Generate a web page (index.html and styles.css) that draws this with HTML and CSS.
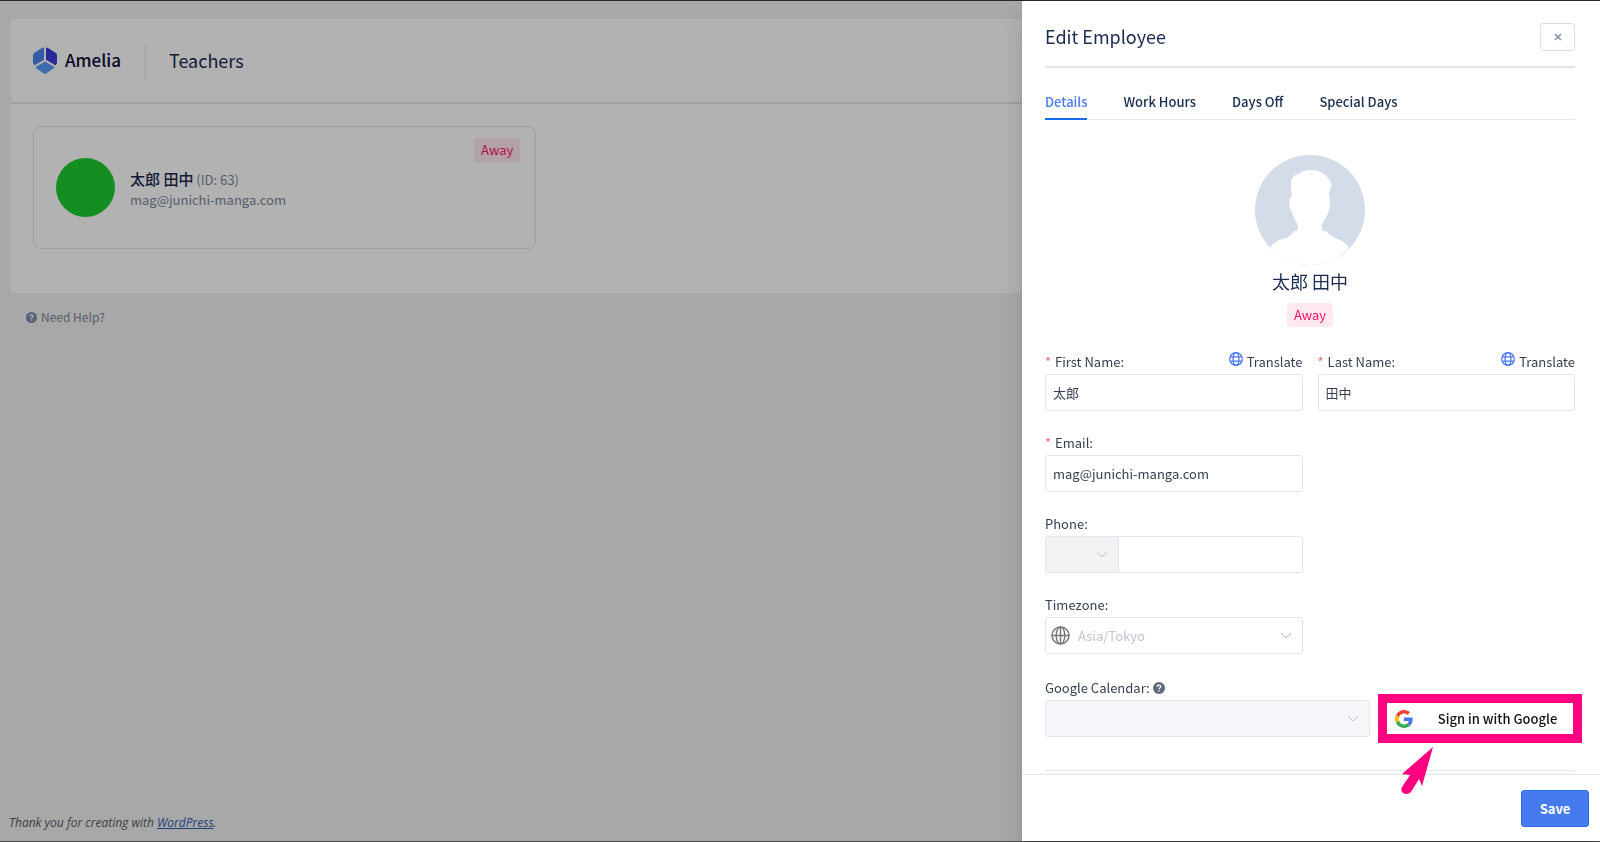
FILE: index.html
```html
<!DOCTYPE html>
<html lang="ja">
<head>
  <meta charset="UTF-8" />
  <meta name="viewport" content="width=device-width, initial-scale=1.0"/>
  <title>Amelia - Teachers</title>
  <link rel="stylesheet" href="styles.css">
</head>
<body>
  <div class="admin-bar"></div>

  <!-- Page behind the dialog -->
  <div class="page">
    <main class="panel">
      <header class="panel-header">
        <div class="logo">
          <svg width="24" height="27" viewBox="0 0 24 27">
            <path d="M11 1.2v11.6L1.600 18.200Q0 17.400 0 15.600V8.400Q0 6.600 1.500 5.700L9 .9Q11-.2 11 1.200z" fill="#4a83ee"/>
            <path d="M13 1.200v11.600l9.400 5.400q1.600-.8 1.600-2.600V8.400q0-1.800-1.500-2.700L15 .9q-2-1.100-2 .3z" fill="#3a3cdf"/>
            <path d="M12 14.600l9 5.200q.9.600 0 1.200l-7.400 5.200q-1.600 1-3.200 0L3 21q-.9-.6 0-1.200z" fill="#5a9df5"/>
          </svg>
          <span class="logo-text">Amelia</span>
        </div>
        <h1>Teachers</h1>
      </header>

      <div class="employees">
        <div class="employee">
          <div class="employee-photo"></div>
          <div class="employee-info">
            <div><strong>太郎 田中</strong> (ID: 63)</div>
            <div>mag@junichi-manga.com</div>
          </div>
          <span class="badge">Away</span>
        </div>
      </div>
    </main>

    <a class="help" href="#">
      <svg width="11" height="11" viewBox="0 0 12 12">
        <circle cx="6" cy="6" r="6" fill="#7f8bab"/>
        <path d="M4.300 4.700q0-1.600 1.700-1.600t1.700 1.400q0 .8-.9 1.300Q6 6.200 6 7" fill="none" stroke="#fff" stroke-width="1.300"/>
        <circle cx="6" cy="8.800" r=".8" fill="#fff"/>
      </svg>
      Need Help?
    </a>

    <footer class="page-footer">Thank you for creating with <a href="#">WordPress</a>.</footer>
  </div>
  <div class="overlay"></div>

  <!-- Edit dialog -->
  <form class="drawer">
    <div class="drawer-body">
      <div class="drawer-header">
        <h2>Edit Employee</h2>
        <button type="button" class="close" aria-label="Close">
          <svg width="8" height="8" viewBox="0 0 8 8"><path d="M1 1l6 6M7 1L1 7" stroke="#8590a6" stroke-width="1.5"/></svg>
        </button>
      </div>

      <nav class="tabs">
        <button type="button" class="tab active">Details</button>
        <button type="button" class="tab">Work Hours</button>
        <button type="button" class="tab">Days Off</button>
        <button type="button" class="tab">Special Days</button>
      </nav>

      <div class="profile">
        <svg width="110" height="110" viewBox="0 0 110 110">
          <circle cx="55" cy="55" r="55" fill="#d4dbe9"/>
          <path d="M15 93Q19 86 28 84Q36 82 39 76L42 76Q44 72 42 68Q39 64 38 60Q33 51 35 43L37 41Q34 24 39 21Q42 19 44 19Q48 15 56 15Q67 15 73 23Q78 29 76 33Q74 35 74 41L75 43Q76 52 73 58Q70 65 67 69Q66 72 68 76L71 76Q76 82 85 85Q91 88 94 93Q78 110 55 110Q32 110 15 93z" fill="#fff"/>
        </svg>
        <h3>太郎 田中</h3>
        <span class="badge">Away</span>
      </div>

      <div class="fields">
        <div class="field">
          <div class="label-row">
            <label class="required" for="first-name">First Name:</label>
            <a class="translate" href="#">
              <svg width="14" height="14" viewBox="0 0 14 14" fill="none" stroke="#4a74f0" stroke-width="1.2"><circle cx="7" cy="7" r="6.300"/><ellipse cx="7" cy="7" rx="3" ry="6.300"/><path d="M1.300 4.800h11.400M1.300 9.200h11.400"/></svg>
              Translate
            </a>
          </div>
          <input type="text" id="first-name" value="太郎">
        </div>

        <div class="field">
          <div class="label-row">
            <label class="required" for="last-name">Last Name:</label>
            <a class="translate" href="#">
              <svg width="14" height="14" viewBox="0 0 14 14" fill="none" stroke="#4a74f0" stroke-width="1.2"><circle cx="7" cy="7" r="6.300"/><ellipse cx="7" cy="7" rx="3" ry="6.300"/><path d="M1.300 4.800h11.400M1.300 9.200h11.400"/></svg>
              Translate
            </a>
          </div>
          <input type="text" id="last-name" value="田中">
        </div>

        <div class="field first-column">
          <label class="required" for="email">Email:</label>
          <input type="email" id="email" value="mag@junichi-manga.com">
        </div>

        <div class="field first-column">
          <label for="phone">Phone:</label>
          <div class="phone">
            <div class="select country">
              <select aria-label="Country code" disabled><option></option></select>
              <svg class="chevron" width="12" height="7" viewBox="0 0 12 7"><path d="M1 1l5 5 5-5" fill="none" stroke="#c0c4cc"/></svg>
            </div>
            <input type="tel" id="phone">
          </div>
        </div>

        <div class="field first-column">
          <label for="timezone">Timezone:</label>
          <div class="select timezone">
            <svg class="globe" width="19" height="19" viewBox="0 0 19 19" fill="none" stroke="#777" stroke-width="1.500"><circle cx="9.500" cy="9.500" r="8.500"/><ellipse cx="9.500" cy="9.500" rx="4.300" ry="8.500"/><path d="M1 9.500h17M9.500 1v17"/></svg>
            <select id="timezone"><option>Asia/Tokyo</option></select>
            <svg class="chevron" width="12" height="7" viewBox="0 0 12 7"><path d="M1 1l5 5 5-5" fill="none" stroke="#c0c4cc"/></svg>
          </div>
        </div>
      </div>

      <div class="field calendar">
        <label for="calendar">Google Calendar:
          <svg width="12" height="12" viewBox="0 0 12 12">
            <circle cx="6" cy="6" r="6" fill="#5f6b7e"/>
            <path d="M4.300 4.700q0-1.600 1.700-1.600t1.700 1.400q0 .8-.9 1.300Q6 6.200 6 7" fill="none" stroke="#fff" stroke-width="1.300"/>
            <circle cx="6" cy="8.800" r=".8" fill="#fff"/>
          </svg>
        </label>
        <div class="calendar-row">
          <div class="select">
            <select id="calendar" disabled><option></option></select>
            <svg class="chevron" width="12" height="7" viewBox="0 0 12 7"><path d="M1 1l5 5 5-5" fill="none" stroke="#c0c4cc"/></svg>
          </div>
          <button type="button" class="google">
            <svg width="18" height="18" viewBox="0 0 48 48">
              <path fill="#EA4335" d="M24 9.500c3.540 0 6.710 1.220 9.210 3.600l6.850-6.850C35.900 2.380 30.470 0 24 0 14.620 0 6.510 5.380 2.560 13.220l7.980 6.190C12.430 13.720 17.740 9.500 24 9.500z"/>
              <path fill="#4A74F0" d="M46.980 24.550c0-1.570-.15-3.090-.38-4.550H24v9.020h12.940c-.58 2.960-2.260 5.480-4.780 7.180l7.730 6c4.510-4.180 7.090-10.360 7.090-17.650z"/>
              <path fill="#FBBC05" d="M10.530 28.590c-.48-1.450-.76-2.990-.76-4.590s.27-3.140.76-4.590l-7.980-6.190C.92 16.460 0 20.120 0 24c0 3.880.92 7.540 2.560 10.780l7.970-6.190z"/>
              <path fill="#34A853" d="M24 48c6.480 0 11.930-2.130 15.890-5.810l-7.730-6c-2.150 1.450-4.920 2.300-8.160 2.300-6.260 0-11.570-4.220-13.470-9.910l-7.980 6.190C6.510 42.620 14.620 48 24 48z"/>
            </svg>
            <span>Sign in with Google</span>
          </button>
        </div>
      </div>
      <hr>
    </div>

    <div class="drawer-footer">
      <button type="submit" class="save">Save</button>
    </div>

    <svg class="arrow" width="33" height="48" viewBox="0 0 33 48">
      <path d="M32 0L1 27l8 1L1 40q-2 5 2 6.500t7-1.500l8-13 3 7z" fill="#ff0080"/>
    </svg>
  </form>
</body>
</html>
```
FILE: styles.css
```css
* {
  box-sizing: border-box;
}

body {
  font-family: "Noto Sans CJK JP", sans-serif;
  font-size: 13px;
  line-height: 20px;
  margin: 0;
  min-height: 100vh;
  display: flex;
  flex-direction: column;
  color: #354052;
  background-color: #f1f1f1;
  border-bottom: 1px solid #4f4f4f;
}

h1, h2, h3 {
  margin: 0;
  font-size: 18px;
  font-weight: 400;
  line-height: 28px;
  color: #1a2c50;
}

a {
  color: inherit;
  text-decoration: none;
}

button, input, select {
  font-family: inherit;
  font-size: 13px;
  color: #354052;
}

.admin-bar {
  height: 1px;
  background: #23282d;
}

/* Employee list */
.page {
  flex: 1;
  display: flex;
  flex-direction: column;
  padding: 18px 11px 8px;
}

.panel {
  background: #fff;
  padding-bottom: 44px;
}

.panel-header {
  display: flex;
  align-items: center;
  height: 85px;
  padding: 0 22px;
  border-bottom: 2px solid #e2e6ec;
}

.panel-header h1 {
  padding: 0 0 2px 23px;
}

.logo {
  display: flex;
  align-items: center;
  gap: 8px;
  height: 36px;
  padding-right: 24px;
  border-right: 1px solid #e2e6ec;
}

.logo-text {
  padding-bottom: 2px;
  font-size: 17px;
  font-weight: 500;
  color: #0b0b38;
}

.employees {
  display: grid;
  grid-template-columns: repeat(3, 1fr);
  gap: 12px;
  padding: 22px 22px 0;
}

.employee {
  position: relative;
  display: flex;
  align-items: center;
  gap: 15px;
  height: 123px;
  padding: 0 22px;
  border: 1px solid #dfe4ee;
  border-radius: 8px;
  color: #7c869c;
}

.employee-info {
  padding-top: 3px;
}

.employee strong {
  font-size: 15px;
  font-weight: 500;
  color: #1a2c50;
}

.employee-photo {
  width: 59px;
  height: 59px;
  border-radius: 50%;
  background: #1dcc30;
}

.badge {
  padding: 2px 7px;
  border-radius: 3px;
  color: #ff1563;
  background: #ffe8ef;
}

.employee .badge {
  position: absolute;
  top: 11px;
  right: 15px;
}

.help {
  display: flex;
  align-items: center;
  gap: 4px;
  margin: 14px 15px;
  font-size: 12px;
  color: #7c869c;
}

.page-footer {
  margin-top: auto;
  margin-left: -2px;
  font-family: "Open Sans", sans-serif;
  font-size: 12px;
  font-style: italic;
  color: #555d66;
}

.page-footer a {
  color: #2a5fb0;
  text-decoration: underline;
}

.overlay {
  position: fixed;
  inset: 1px 0;
  background: rgba(0, 0, 0, 0.3);
}

/* Dialog */
.drawer {
  position: fixed;
  top: 1px;
  right: 0;
  bottom: 1px;
  display: flex;
  flex-direction: column;
  width: 578px;
  max-width: 100%;
  background: #fff;
  box-shadow: 0 8px 10px -5px rgba(0, 0, 0, 0.2), 0 16px 24px 2px rgba(0, 0, 0, 0.12);
}

.drawer-body {
  flex: 1;
  min-height: 0;
  overflow: hidden;
  padding: 0 25px 0 23px;
}

.drawer-header {
  display: flex;
  align-items: center;
  justify-content: space-between;
  height: 67px;
  padding-top: 6px;
  border-bottom: 2px solid #e2e6ec;
}

.drawer-header h2 {
  padding-bottom: 2px;
}

.close {
  width: 35px;
  height: 28px;
  padding: 0;
  line-height: 8px;
  background: #fff;
  border: 1px solid #d8dde8;
  border-radius: 3px;
}

.tabs {
  display: flex;
  gap: 36px;
  margin-top: 16px;
  border-bottom: 1px solid #e6e9ef;
}

.tab {
  padding: 2px 0 0;
  height: 36px;
  font-weight: 500;
  line-height: 32px;
  color: #1a2c50;
  background: none;
  border: none;
  border-bottom: 2px solid transparent;
  margin-bottom: -1px;
}

.tab.active {
  color: #4a7cee;
  border-bottom-color: #1a6af5;
}

.profile {
  display: flex;
  flex-direction: column;
  align-items: center;
  padding-top: 35px;
}

.profile h3 {
  margin: 2px 0 8px;
}

.fields {
  display: grid;
  grid-template-columns: 1fr 1fr;
  gap: 22px 15px;
  margin-top: 25px;
}

.first-column {
  grid-column: 1;
}

.field label {
  display: block;
  margin-bottom: 2px;
}

.field .required::before {
  content: "*";
  margin-right: 4px;
  color: #f56c6c;
}

.label-row {
  display: flex;
  justify-content: space-between;
}

.translate {
  display: flex;
  gap: 4px;
}

input, select {
  display: block;
  width: 100%;
  height: 37px;
  padding: 0 7px;
  background: #fff;
  border: 1px solid #e2e6ec;
  border-radius: 3px;
}

.phone {
  display: flex;
}

.phone input {
  border-left: none;
  border-radius: 0 3px 3px 0;
}

.select {
  position: relative;
}

.select select {
  appearance: none;
  opacity: 1;
}

.country {
  flex: none;
  width: 74px;
}

.country select {
  background: #f2f3f5;
  border-radius: 3px 0 0 3px;
}

.chevron {
  position: absolute;
  top: 15px;
  right: 11px;
}

.timezone select {
  padding-left: 32px;
  color: #c0c4cc;
}

.globe {
  position: absolute;
  top: 9px;
  left: 6px;
}

.calendar {
  margin-top: 24px;
}

.calendar label svg {
  vertical-align: -1px;
}

.calendar-row {
  display: flex;
  align-items: center;
  gap: 8px;
  height: 37px;
  margin-right: -7px;
}

.calendar-row .select {
  flex: 1;
}

.calendar-row select {
  background: #f5f7fa;
}

.google {
  display: flex;
  align-items: center;
  width: 204px;
  height: 49px;
  padding: 0 8px;
  background: #fff;
  border: 9px solid #ff0080;
  color: #111;
  font-weight: 500;
}

.google span {
  flex: 1;
  padding-left: 17px;
}

hr {
  margin: 33px 0 0;
  border: none;
  border-top: 1px solid #e2e6ec;
}

.drawer-footer {
  display: flex;
  justify-content: flex-end;
  padding: 15px 11px 14px;
  border-top: 1px solid #e2e6ec;
}

.save {
  width: 68px;
  height: 37px;
  font-weight: 700;
  color: #fff;
  background: #457bee;
  border: 1px solid #2c6cf0;
  border-radius: 3px;
}

.arrow {
  position: absolute;
  right: 166px;
  bottom: 46px;
}
```
